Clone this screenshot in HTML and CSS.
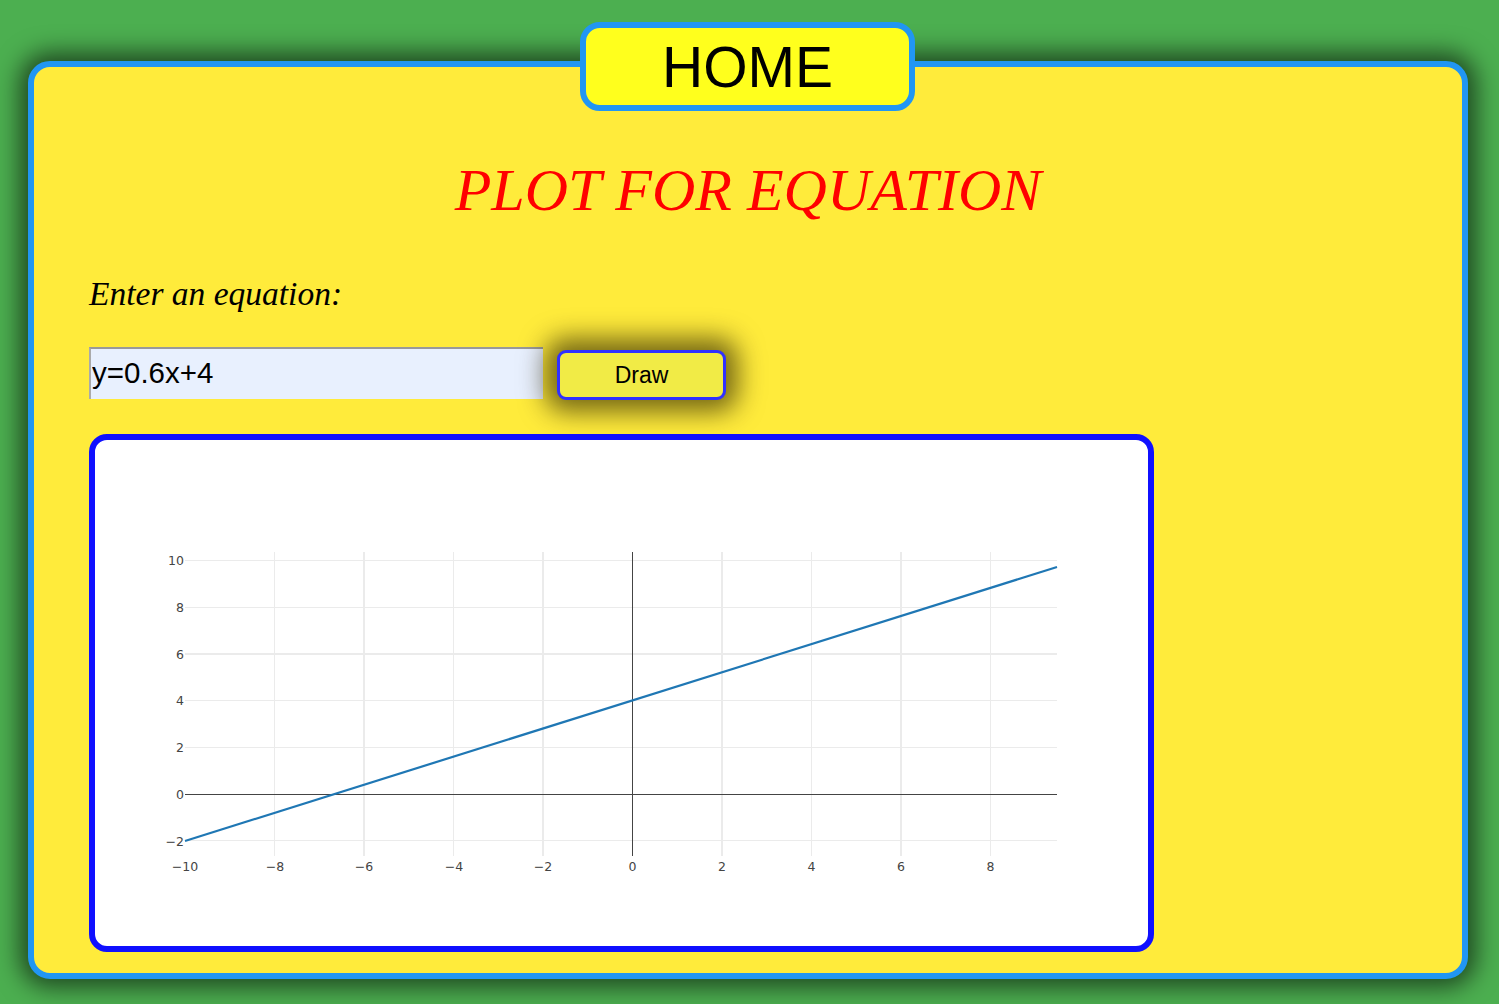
FILE: index.html
```html
<!DOCTYPE html>
<html>
<head>
<meta charset="utf-8">
<link rel="stylesheet" href="styles.css">
</head>
<body>
<div class="top">
  <a class="home">HOME</a>
</div>
<div class="card">
  <h1 class="title">PLOT FOR EQUATION</h1>
  <label class="label">Enter an equation:</label>
  <div class="row">
    <input class="eq" type="text" value="y=0.6x+4">
    <button class="draw">Draw</button>
  </div>
  <div class="plotbox">
    <svg class="plot" width="1053" height="506" viewBox="95 440 1053 506" xmlns="http://www.w3.org/2000/svg">
      <g stroke="#ebebeb" stroke-width="1">
        <line x1="185" y1="560.5" x2="1057" y2="560.5"/>
        <line x1="185" y1="607.5" x2="1057" y2="607.5"/>
        <line x1="185" y1="654" x2="1057" y2="654" stroke-width="2"/>
        <line x1="185" y1="700.5" x2="1057" y2="700.5"/>
        <line x1="185" y1="747.5" x2="1057" y2="747.5"/>
        <line x1="185" y1="840.5" x2="1057" y2="840.5"/>
        <line x1="274.5" y1="552" x2="274.5" y2="856"/>
        <line x1="364" y1="552" x2="364" y2="856" stroke-width="2"/>
        <line x1="453.5" y1="552" x2="453.5" y2="856"/>
        <line x1="543" y1="552" x2="543" y2="856" stroke-width="2"/>
        <line x1="722" y1="552" x2="722" y2="856" stroke-width="2"/>
        <line x1="811.5" y1="552" x2="811.5" y2="856"/>
        <line x1="901" y1="552" x2="901" y2="856" stroke-width="2"/>
        <line x1="990.5" y1="552" x2="990.5" y2="856"/>
      </g>
      <g stroke="#444" stroke-width="1">
        <line x1="185" y1="794.5" x2="1057" y2="794.5"/>
        <line x1="632.5" y1="552" x2="632.5" y2="856"/>
      </g>
      <line x1="185" y1="841" x2="1057" y2="567" stroke="#1f77b4" stroke-width="2.2"/>
      <g class="ticks" text-anchor="end">
        <text x="184" y="565">10</text>
        <text x="184" y="612">8</text>
        <text x="184" y="659">6</text>
        <text x="184" y="705">4</text>
        <text x="184" y="752">2</text>
        <text x="184" y="799">0</text>
        <text x="184" y="846">−2</text>
      </g>
      <g class="ticks" text-anchor="middle">
        <text x="185" y="871">−10</text>
        <text x="275" y="871">−8</text>
        <text x="364" y="871">−6</text>
        <text x="454" y="871">−4</text>
        <text x="543" y="871">−2</text>
        <text x="632.5" y="871">0</text>
        <text x="722" y="871">2</text>
        <text x="811.5" y="871">4</text>
        <text x="901" y="871">6</text>
        <text x="990.5" y="871">8</text>
      </g>
    </svg>
  </div>
</div>
</body>
</html>
```

FILE: styles.css
```css
html, body {
  margin: 0;
  padding: 0;
}
body {
  background: #4caf50;
  width: 1499px;
  height: 1004px;
  overflow: hidden;
  font-family: "Liberation Sans", Arial, sans-serif;
}
.top {
  display: flex;
  justify-content: center;
  padding-top: 22px;
  padding-right: 4px;
  margin-bottom: -50px;
  position: relative;
  z-index: 2;
}
.home {
  box-sizing: border-box;
  width: 335px;
  height: 89px;
  border: 6px solid #2196f3;
  border-radius: 20px;
  background: #ffff1d;
  color: #000;
  font-size: 57px;
  display: flex;
  align-items: center;
  justify-content: center;
  padding-top: 1px;
}
.card {
  box-sizing: border-box;
  margin: 0 31px 0 28px;
  height: 918px;
  background: #ffeb3b;
  border: 6px solid #2196f3;
  border-radius: 22px;
  box-shadow: 0 0 24px 8px rgba(0, 0, 0, 0.6);
  padding: 0 55px;
  display: flex;
  flex-direction: column;
  align-items: flex-start;
}
.title {
  align-self: stretch;
  margin: 88px 0 0;
  text-align: center;
  font-family: "Liberation Serif", "Times New Roman", serif;
  font-style: italic;
  font-weight: normal;
  font-size: 60px;
  line-height: 70px;
  color: #ff0000;
}
.label {
  margin-top: 49px;
  font-family: "Liberation Serif", "Times New Roman", serif;
  font-style: italic;
  font-size: 33.5px;
  line-height: 40px;
  color: #000;
}
.row {
  margin-top: 33px;
  display: flex;
  align-items: flex-start;
  gap: 14px;
}
.eq {
  box-sizing: border-box;
  width: 454px;
  height: 52px;
  margin: 0;
  padding: 0 0 2px 1px;
  border: none;
  border-top: 2px solid #999;
  border-left: 2px solid #aaa;
  background: #e8f0fe;
  font-family: "Liberation Sans", Arial, sans-serif;
  font-size: 29.5px;
  color: #000;
  outline: none;
}
.draw {
  box-sizing: border-box;
  width: 169px;
  height: 50px;
  margin-top: 3px;
  border: 3px solid #3030ff;
  border-radius: 9px;
  background: #f1eb46;
  font-family: "Liberation Sans", Arial, sans-serif;
  font-size: 23px;
  color: #000;
  box-shadow: 0 0 26px 12px rgba(45, 35, 0, 0.65);
  padding: 0;
}
.plotbox {
  box-sizing: border-box;
  margin-top: 34px;
  width: 1065px;
  height: 518px;
  border: 6px solid #1010ff;
  border-radius: 18px;
  background: #ffffff;
  overflow: hidden;
}
.plot {
  display: block;
}
.ticks text {
  font-family: "DejaVu Sans", Verdana, sans-serif;
  font-size: 12.5px;
  fill: #444;
}
```
